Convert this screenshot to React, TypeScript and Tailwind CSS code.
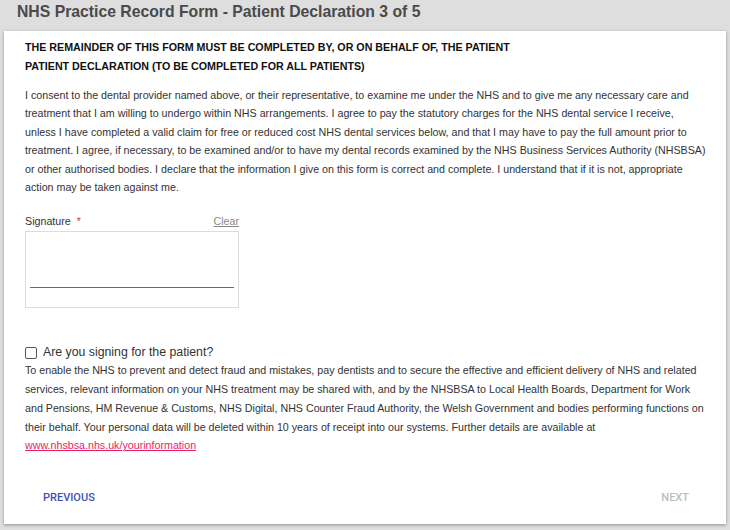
import React from "react";

const p1 = [
  "I consent to the dental provider named above, or their representative, to examine me under the NHS and to give me any necessary care and",
  "treatment that I am willing to undergo within NHS arrangements. I agree to pay the statutory charges for the NHS dental service I receive,",
  "unless I have completed a valid claim for free or reduced cost NHS dental services below, and that I may have to pay the full amount prior to",
  "treatment. I agree, if necessary, to be examined and/or to have my dental records examined by the NHS Business Services Authority (NHSBSA)",
  "or other authorised bodies. I declare that the information I give on this form is correct and complete. I understand that if it is not, appropriate",
  "action may be taken against me.",
];

const p2 = [
  "To enable the NHS to prevent and detect fraud and mistakes, pay dentists and to secure the effective and efficient delivery of NHS and related",
  "services, relevant information on your NHS treatment may be shared with, and by the NHSBSA to Local Health Boards, Department for Work",
  "and Pensions, HM Revenue & Customs, NHS Digital, NHS Counter Fraud Authority, the Welsh Government and bodies performing functions on",
  "their behalf. Your personal data will be deleted within 10 years of receipt into our systems. Further details are available at",
];

export default function App() {
  return (
    <div className="w-[730px] h-[530px] bg-[#dedede] flex flex-col overflow-hidden" style={{ fontFamily: '"Liberation Sans", Arial, sans-serif' }}>
      <div className="h-[31px] pl-[17px] pt-[2px] text-[15.75px] font-bold text-[#4a4a4a] leading-[20px]">
        NHS Practice Record Form - Patient Declaration 3 of 5
      </div>
      <div className="mx-[4px] h-[493px] bg-white shadow-[0_1px_3px_rgba(0,0,0,0.35)] pl-[21px] pr-[20px] pt-[7px] flex flex-col text-[#333]">
        <div className="text-[10.7px] font-bold text-[#111] leading-[19px]">
          <div>THE REMAINDER OF THIS FORM MUST BE COMPLETED BY, OR ON BEHALF OF, THE PATIENT</div>
          <div>PATIENT DECLARATION (TO BE COMPLETED FOR ALL PATIENTS)</div>
        </div>
        <div className="mt-[10px] text-[10.7px] leading-[18.4px] whitespace-nowrap">
          {p1.map((l, i) => (
            <div key={i}>{l}</div>
          ))}
        </div>
        <div className="mt-[18px] w-[214px] flex flex-col">
          <div className="flex justify-between items-end text-[10.7px] leading-[14px] pb-[3px]">
            <span className="text-[#333]">Signature <span className="text-[#e53935] ml-[3px]">*</span></span>
            <span className="text-[#8a8a8a] underline">Clear</span>
          </div>
          <div className="h-[77px] border border-[#dcdcdc] flex flex-col px-[4px] pt-[55px]">
            <div className="h-[1px] bg-[#6b6b6b]"></div>
          </div>
        </div>
        <div className="mt-[36px] flex items-center">
          <div className="w-[12px] h-[12px] border-[1.5px] border-[#555] rounded-[2px]"></div>
          <span className="ml-[6px] text-[12.3px] text-[#333] leading-[17px]">Are you signing for the patient?</span>
        </div>
        <div className="mt-0 text-[10.7px] leading-[18.75px] whitespace-nowrap">
          {p2.map((l, i) => (
            <div key={i}>{l}</div>
          ))}
          <div>
            <span className="text-[#e91e63] underline">www.nhsbsa.nhs.uk/yourinformation</span>
          </div>
        </div>
        <div className="mt-auto mb-[19px] flex justify-between items-center pl-[18px] pr-[17px] text-[11px] font-medium leading-[14px]" style={{ fontFamily: 'Roboto, "Liberation Sans", sans-serif' }}>
          <span className="text-[#3f51b5]">PREVIOUS</span>
          <span className="text-[#bdbdbd]">NEXT</span>
        </div>
      </div>
    </div>
  );
}
